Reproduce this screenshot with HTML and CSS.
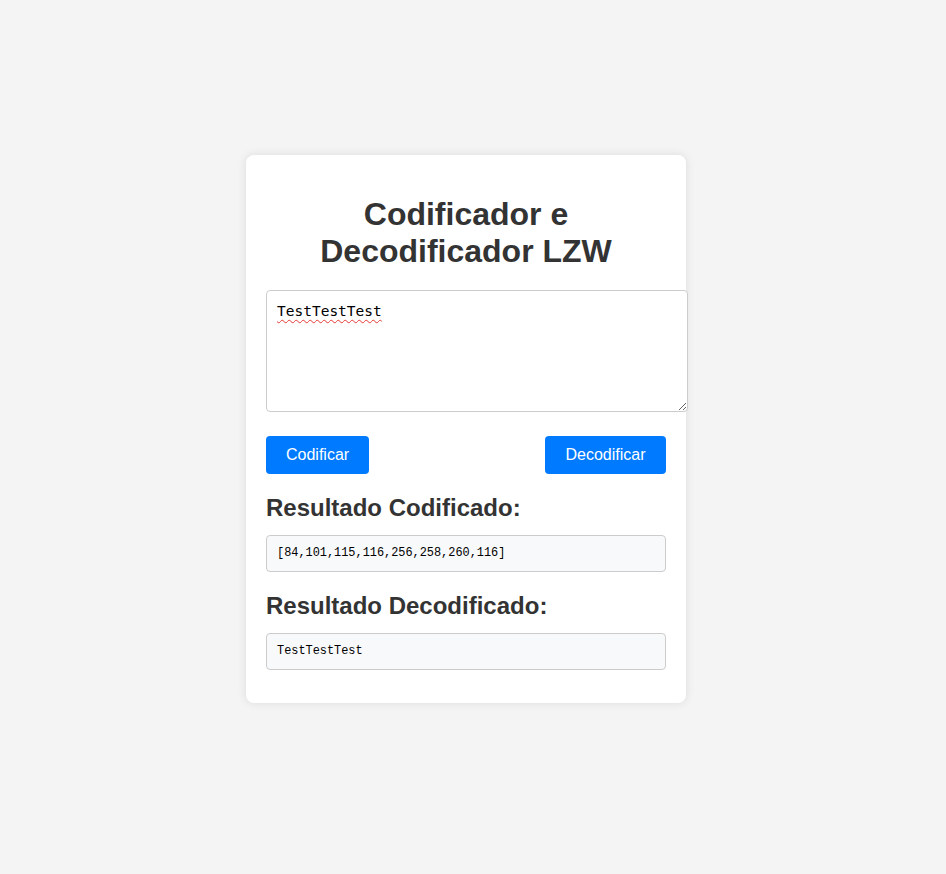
FILE: index.html
```html
<!DOCTYPE html>
<html lang="pt">
<head>
<meta charset="utf-8">
<title>Codificador e Decodificador LZW</title>
<link rel="stylesheet" href="styles.css">
</head>
<body>
<div class="page">
  <div class="card">
    <h1 class="title">Codificador e Decodificador LZW</h1>
    <textarea class="input" spellcheck="true">TestTestTest</textarea>
    <div class="actions">
      <button class="btn">Codificar</button>
      <button class="btn btn-wide">Decodificar</button>
    </div>
    <h2 class="subtitle">Resultado Codificado:</h2>
    <pre class="result">[84,101,115,116,256,258,260,116]</pre>
    <h2 class="subtitle">Resultado Decodificado:</h2>
    <pre class="result">TestTestTest</pre>
  </div>
</div>
</body>
</html>
```
FILE: styles.css
```css
html, body {
  margin: 0;
  padding: 0;
  background: #f4f4f4;
  font-family: "Liberation Sans", Arial, sans-serif;
  color: #333;
}
.page {
  padding: 155px 0 0 246px;
  min-height: 100vh;
  box-sizing: border-box;
}
.card {
  width: 400px;
  padding: 20px;
  background: #fff;
  border-radius: 8px;
  box-shadow: 0 0 10px rgba(0, 0, 0, 0.1);
}
.title {
  font-size: 32px;
  font-weight: bold;
  text-align: center;
  margin: 21px 0 20px;
  line-height: 37px;
}
.input {
  display: block;
  width: 400px;
  height: 100px;
  padding: 11px 10px 9px;
  margin: 0;
  border: 1px solid #ccc;
  border-radius: 4px;
  font-family: "DejaVu Sans Mono", "Liberation Mono", monospace;
  font-size: 14.5px;
  line-height: 18px;
  color: #000;
  text-decoration: underline wavy #e53935;
  text-underline-offset: 3px;
  text-decoration-thickness: 1px;
}
.actions {
  display: flex;
  justify-content: space-between;
  margin-top: 24px;
}
.btn {
  background: #007bff;
  color: #fff;
  border: none;
  border-radius: 4px;
  padding: 10px 20px;
  font-family: "Liberation Sans", Arial, sans-serif;
  font-size: 16px;
  line-height: 18px;
  cursor: pointer;
}
.btn-wide {
  padding: 10px 20.5px;
}
.subtitle {
  font-size: 24px;
  font-weight: bold;
  margin: 20px 0 0;
  line-height: 28px;
}
.result {
  margin: 13px 0;
  padding: 10px;
  background: #f8f9fa;
  border: 1px solid #ccc;
  border-radius: 4px;
  font-family: "Liberation Mono", "DejaVu Sans Mono", monospace;
  font-size: 11.9px;
  line-height: 15px;
  color: #000;
}
```
